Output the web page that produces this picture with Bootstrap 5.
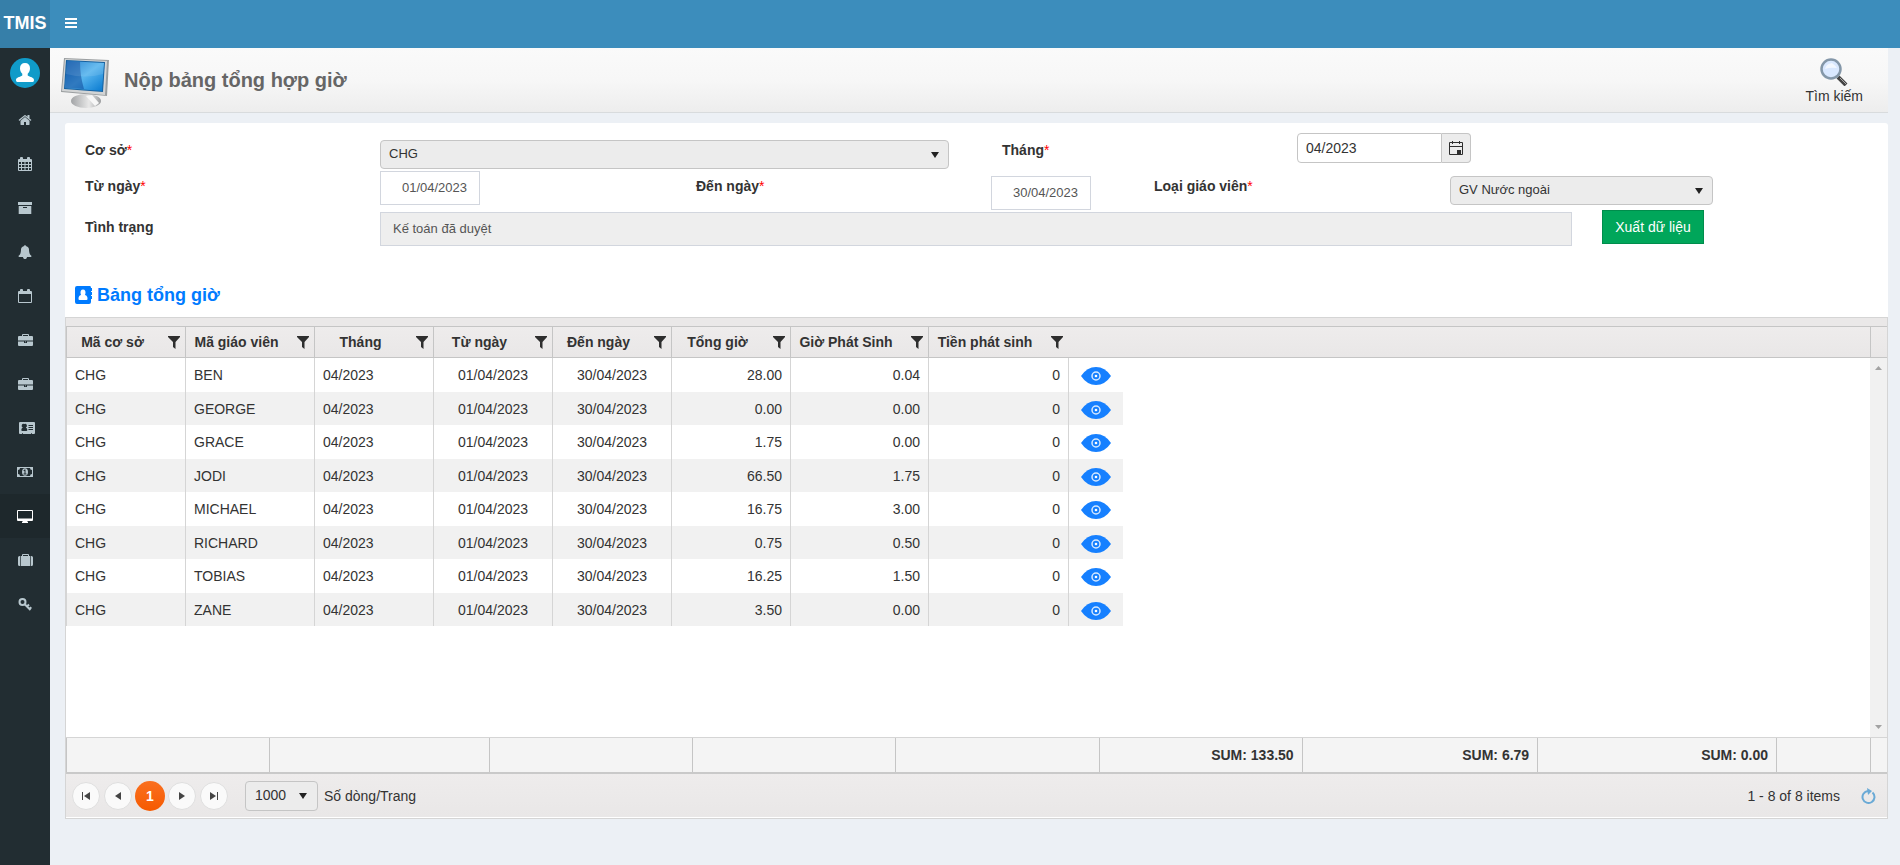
<!DOCTYPE html>
<html lang="vi">
<head>
<meta charset="utf-8">
<meta name="viewport" content="width=device-width, initial-scale=1">
<title>TMIS - Nộp bảng tổng hợp giờ</title>
<link href="https://cdn.jsdelivr.net/npm/bootstrap@5.3.0/dist/css/bootstrap.min.css" rel="stylesheet">
<style>
body{font-family:"Liberation Sans",Arial,sans-serif;font-size:14px;line-height:20px;color:#333;background:#ecf0f5}
svg{display:block}
.topbar{background:#3c8dbc;height:48px}
.brand{width:50px;padding-bottom:2px;background:#367fa9;font-size:18px}
.toggle{width:42px;padding:0 0 2px}
.side{width:50px;background:#222d32}
.side-user{height:50px;padding-top:10px}
.side a{height:44px;color:#b8c7ce}
.side a.active{background:#1e282c;color:#fff}
.page-main{min-width:0;padding-bottom:46px}
.page-head{height:65px;margin-right:12px;background:linear-gradient(#fafafa,#f7f7f7 50%,#ededed);border-bottom:1px solid #d8dbdd}
.page-head h1{font-size:20px;line-height:24px;color:#666;margin-left:14px}
.find{color:#333;margin-right:25px;padding-top:4px}
.panel{margin:10px 12px 0 15px;background:#fff;border-radius:3px 3px 0 0}
.filters{padding:10px 15px 0 20px}
.line{display:grid;align-items:start}
.line-1{grid-template-columns:295fr 569fr 53fr 295fr 576fr;min-height:38px}
.line-2{grid-template-columns:295fr 316fr 295fr 163fr 296fr 263fr 160fr}
.line-3{grid-template-columns:295fr 1192fr 30fr 271fr}
.line label{font-weight:700}
.line sup{color:#f00;font-weight:400;font-size:14px;line-height:0;top:0;vertical-align:baseline}
.mt-s{margin-top:5px}.mt-m{margin-top:7px}.mt-xs{margin-top:2px}
.pick{height:29px;padding:0 28px 2px 8px;font-size:13px;line-height:20px;color:#333;border:1px solid #c5c5c5;border-radius:4px;background:#ececec url("data:image/svg+xml,%3Csvg xmlns='http://www.w3.org/2000/svg' width='8' height='6'%3E%3Cpath d='M0 0h8L4 6z' fill='%23222'/%3E%3C/svg%3E") no-repeat right 9px center;background-size:8px 6px}
.flat{height:34px;border:1px solid #d2d6de;border-radius:0;font-size:13px;color:#555;padding:0 12px 2px}
.flat.date{width:100px;text-align:right}
.flat[readonly]{background:#eee}
.month{width:174px;height:30px}
.month input{border:1px solid #c5c5c5;border-radius:4px 0 0 4px;font-size:14px;color:#333;padding:0 8px}
.month button{width:29px;flex-shrink:0;border:1px solid #c5c5c5;border-left:0;border-radius:0 4px 4px 0;background:#ececec;padding:0}
.export{width:102px;height:34px;border:1px solid #008d4c;background:#00a65a;color:#fff;border-radius:0;font-size:14px;padding:0}
.panel h2{font-size:18px;line-height:24px;color:#007bff;margin:37px 0 10px 10px}
.grid-box{margin:0 12px 0 15px;border:1px solid #d5d5d5;background:#fff}
.grid-tools{height:8px;background:#eae8e8}
.grid-box table{table-layout:fixed;border-collapse:separate;border-spacing:0}
.grid-head{background:linear-gradient(#eeecec,#e9e7e7);border-top:1px solid #c5c5c5;border-bottom:1px solid #c5c5c5}
.grid-head th{height:30px;padding:0;border-left:1px solid #c5c5c5}
.grid-head th:last-child{border-left:0}
.head-cell{padding:0 5px 0 7px}
.head-cell span{flex:1;text-align:center;white-space:nowrap}
.head-cell button{border:0;background:none;padding:1px 0 0 17px;color:#2e2e2e}
.scroll-pad{width:17px}
.head-pad{border-left:1px solid #c5c5c5}
.c-a{width:119px}.c-b{width:129px}.c-c{width:138px}.c-d{width:140px}.c-e{width:55px}
.rows{width:1057px}
.rows td{height:34px;padding:0 8px;border-left:1px solid #d5d5d5}
.rows tr:nth-child(even) td{height:33px;background:#f1f1f1}
.rows td:last-child{padding:2px 12px 0 12px}
.rows button{border:0;background:none;padding:0;display:block}
.track{background:#f1f1f1;padding:8px 4px}
.sums{background:#f4f4f4;border-top:1px solid #d5d5d5;border-bottom:2px solid #c9c9c9}
.sums td{height:34px;padding:0 8px;border-left:1px solid #c5c5c5;font-weight:700;text-align:right}
.pager{height:44px;background:linear-gradient(#eeecec,#e9e7e7);padding:0 11px 0 6px;border-bottom:1px solid #fff}
.round{width:28px;height:28px;border:1px solid #dfdfdf;border-radius:50%;background:#fafafa;padding:0;color:#444}
.round.now{width:30px;height:30px;margin:0 -1px;border:0;color:#fff;font-weight:700;background:linear-gradient(#fa7020,#f65a00)}
.size{width:73px;height:30px;font-size:14px;margin-left:17px;padding-left:9px;background-position:right 10px center}
.size-label{margin-left:6px}
</style>
</head>
<body>
<div class="d-flex flex-column min-vh-100">
<header class="topbar d-flex">
  <a href="#" class="brand d-flex align-items-center justify-content-center text-white fw-bold text-decoration-none">TMIS</a>
  <button class="toggle btn border-0 d-flex align-items-center justify-content-center" aria-label="Menu"><svg width="12" height="10" fill="#fff"><path d="M0 0h12v2H0zM0 4h12v2H0zM0 8h12v2H0z"/></svg></button>
</header>
<div class="d-flex flex-grow-1">
<nav class="side flex-shrink-0">
  <div class="side-user d-flex justify-content-center"><svg width="30" height="30"><circle cx="15" cy="15" r="15" fill="#109bc9"/><path d="M15 5c3.200 0 5 2 5 5.300 0 2.300-1 4.200-2.300 5.500v1.700c2 1.500 6.800 1.800 6.300 5-.2 1-1 1.500-2 1.500H8c-1 0-1.800-.5-2-1.500-.5-3.200 4.300-3.500 6.300-5v-1.700C11 14.500 10 12.600 10 10.300 10 7 11.800 5 15 5z" fill="#fff"/></svg></div>
  <a href="#" class="d-flex align-items-center justify-content-center" aria-label="Trang chủ"><svg width="14" height="14" viewBox="0 0 1792 1792" fill="currentColor"><path d="M1472 992v480q0 26-19 45t-45 19h-384v-384h-256v384h-384q-26 0-45-19t-19-45v-480q0-1 .5-3t.5-3l575-474 575 474q1 2 1 6zm223-69l-62 74q-8 9-21 11h-3q-13 0-21-7l-692-577-692 577q-12 8-24 7-13-2-21-11l-62-74q-8-10-7-23.500t11-21.500l719-599q32-26 76-26t76 26l244 204v-195q0-14 9-23t23-9h192q14 0 23 9t9 23v408l219 182q10 8 11 21.500t-7 23.500z"/></svg></a>
  <a href="#" class="d-flex align-items-center justify-content-center" aria-label="Lịch"><svg width="14" height="14" fill="currentColor" fill-rule="evenodd"><path d="M1 2h1V1q0-1 1-1h1q1 0 1 1v1h4V1q0-1 1-1h1q1 0 1 1v1h1q1 0 1 1v10q0 1-1 1H1q-1 0-1-1V3q0-1 1-1zM1 5v2h2V5zM4 5v2h2.500V5zM7.500 5v2H10V5zM11 5v2h2V5zM1 8v2h2V8zM4 8v2h2.500V8zM7.500 8v2H10V8zM11 8v2h2V8zM1 11v2h2v-2zM4 11v2h2.500v-2zM7.500 11v2H10v-2zM11 11v2h2v-2z"/></svg></a>
  <a href="#" class="d-flex align-items-center justify-content-center" aria-label="Lưu trữ"><svg width="14" height="12" fill="currentColor" fill-rule="evenodd"><path d="M0 0h14v3H0zM.7 4h12.600v8H.7zM5 5v1h4V5z"/></svg></a>
  <a href="#" class="d-flex align-items-center justify-content-center" aria-label="Thông báo"><svg width="14" height="14" viewBox="0 0 1792 1792" fill="currentColor"><path d="M1728 1408q0 52-38 90t-90 38h-448q0 106-75 181t-181 75-181-75-75-181h-448q-52 0-90-38t-38-90q50-42 91-88t85-119.500 74.500-158.500 50-206 19.500-260q0-152 117-282.500t307-158.500q-8-19-8-39 0-40 28-68t68-28 68 28 28 68q0 20-8 39 190 28 307 158.500t117 282.500q0 139 19.500 260t50 206 74.500 158.500 85 119.500 91 88z"/></svg></a>
  <a href="#" class="d-flex align-items-center justify-content-center" aria-label="Lịch dạy"><svg width="14" height="14" fill="currentColor" fill-rule="evenodd"><path d="M1 2h1V1q0-1 1-1h1q1 0 1 1v1h4V1q0-1 1-1h1q1 0 1 1v1h1q1 0 1 1v10q0 1-1 1H1q-1 0-1-1V3q0-1 1-1zM1 5v8h12V5z"/></svg></a>
  <a href="#" class="d-flex align-items-center justify-content-center" aria-label="Công việc"><svg width="15" height="12" fill="currentColor" fill-rule="evenodd"><path d="M4 2V1q0-1 1-1h5q1 0 1 1v1h3q1 0 1 1v3.500H0V3q0-1 1-1zM5 1v1h5V1zM0 7.500h6V9h3V7.500h6V11q0 1-1 1H1q-1 0-1-1zM7 7.500h1v.8H7z"/></svg></a>
  <a href="#" class="d-flex align-items-center justify-content-center" aria-label="Hợp đồng"><svg width="15" height="12" fill="currentColor" fill-rule="evenodd"><path d="M4 2V1q0-1 1-1h5q1 0 1 1v1h3q1 0 1 1v3.500H0V3q0-1 1-1zM5 1v1h5V1zM0 7.500h6V9h3V7.500h6V11q0 1-1 1H1q-1 0-1-1zM7 7.500h1v.8H7z"/></svg></a>
  <a href="#" class="d-flex align-items-center justify-content-center ps-1" aria-label="Nhân sự"><svg width="16" height="12" fill="currentColor" fill-rule="evenodd"><path d="M1 0h14q1 0 1 1v10q0 1-1 1h-2v-.7h-1v.7H4v-.7H3v.7H1q-1 0-1-1V1q0-1 1-1zM5.300 2a1.900 1.900 0 0 0-1.500 3.500Q2.300 6 2.300 8q0 1 1 1h4q1 0 1-1 0-2-1.500-2.500A1.900 1.900 0 0 0 5.300 2zM9.500 3v1h4.500V3zM9.500 5v1h4.500V5zM9.500 7v1h4.500V7z"/></svg></a>
  <a href="#" class="d-flex align-items-center justify-content-center" aria-label="Tiền lương"><svg width="16" height="10" fill="currentColor" fill-rule="evenodd"><path d="M0 0h16v10H0zM3 1Q3 3 1 3v4q2 0 2 2h10q0-2 2-2V3q-2 0-2-2z"/><path d="M8 1.200c2 0 3 1.700 3 3.800S10 8.800 8 8.800 5 7.100 5 5s1-3.800 3-3.800zM7.500 2.500L6.500 3.500v.6h1V6.500h-1v1h3v-1h-1v-4z"/></svg></a>
  <a href="#" class="active d-flex align-items-center justify-content-center" aria-label="Bảng giờ"><svg width="16" height="13" fill="currentColor" fill-rule="evenodd"><path d="M1 0h14q1 0 1 1v9q0 1-1 1h-4.500v1h.5v1H5v-1h.5v-1H1q-1 0-1-1V1q0-1 1-1zM1 1v7.500h14V1z"/></svg></a>
  <a href="#" class="d-flex align-items-center justify-content-center" aria-label="Hành lý"><svg width="15" height="12" fill="currentColor" fill-rule="evenodd"><path d="M4 2V1q0-1 1-1h5q1 0 1 1v1h1v10H3V2zM5 1v1h5V1zM2.300 2v10H1.500Q0 12 0 10.500v-7Q0 2 1.500 2zM12.700 2h.8Q15 2 15 3.500v7q0 1.500-1.500 1.500h-.8z"/></svg></a>
  <a href="#" class="d-flex align-items-center justify-content-center" aria-label="Mật khẩu"><svg width="14" height="13" fill="none" stroke="currentColor" stroke-width="2"><ellipse cx="4.500" cy="4" rx="3" ry="3"/><path d="M6.500 6l6 6M9 8.500L11 6.500M11.500 11l1.800-1.800"/></svg></a>
</nav>
<main class="page-main d-flex flex-column flex-grow-1">
  <div class="page-head d-flex align-items-center justify-content-between">
    <div class="d-flex align-items-center">
      <svg class="ms-2" width="52" height="56"><defs><linearGradient id="scr" x1="0" y1="0" x2="1" y2="1"><stop offset="0" stop-color="#1173c9"/><stop offset=".5" stop-color="#58b5ee"/><stop offset="1" stop-color="#0678cf"/></linearGradient><linearGradient id="met" x1="0" y1="0" x2="1" y2="0"><stop offset="0" stop-color="#a2a4a6"/><stop offset=".6" stop-color="#e8e8e8"/><stop offset="1" stop-color="#9b9d9f"/></linearGradient></defs><ellipse cx="28" cy="49" rx="15" ry="7" fill="url(#met)"/><path d="M28 44l9 10 4-3-7-8z" fill="#f7f7f7"/><path d="M6 6l45 2-2 36-46-4z" fill="#9b9fa1"/><path d="M7 7l42 2-2 34-43-4z" fill="#d2d4d5"/><path d="M8 8l39 2-2 30-39-3z" fill="#17619f"/><path d="M9 9l37 2-2 28-37-3z" fill="url(#scr)"/><path d="M9 9l13 1q0 14 4 27L7 36z" fill="#0a3f92" opacity=".5"/><path d="M8 22q20 5 37 0l1-11L9 9z" fill="#fff" opacity=".1"/></svg>
      <h1 class="fw-bold my-0">Nộp bảng tổng hợp giờ</h1>
    </div>
    <a href="#" class="find text-decoration-none text-center d-flex flex-column align-items-center"><svg width="28" height="28"><path d="M18 19l8 8" stroke="#444" stroke-width="4"/><path d="M20 20l6 6" stroke="#aaa" stroke-width="1"/><circle cx="11" cy="11" r="9.500" fill="#d9e8ff" stroke="#8497a9" stroke-width="2.500"/><path d="M5 11q1-5 7-6 4 3 5 5-7-1-12 1z" fill="#f2f7ff"/></svg><span>Tìm kiếm</span></a>
  </div>
  <section class="panel">
    <form class="filters" onsubmit="return false">
      <div class="line line-1">
        <label class="mt-m" for="site">Cơ sở<sup>*</sup></label>
        <select id="site" class="pick form-select mt-m"><option>CHG</option></select>
        <span></span>
        <label class="mt-m" for="month">Tháng<sup>*</sup></label>
        <div class="month d-flex"><input id="month" class="form-control" value="04/2023"><button type="button" class="d-flex align-items-center justify-content-center" aria-label="Chọn tháng"><svg width="16" height="16" fill="none" stroke="#2e2e2e"><path d="M1.500 2.500h13v12h-13zM1.500 6.500h13M4.500 1v3M11.500 1v3"/><path d="M9 10h4v4H9z" fill="#2e2e2e" stroke="none"/></svg></button></div>
      </div>
      <div class="line line-2">
        <label class="mt-s" for="from">Từ ngày<sup>*</sup></label>
        <input id="from" class="flat date form-control" value="01/04/2023">
        <label class="mt-s" for="to">Đến ngày<sup>*</sup></label>
        <input id="to" class="flat date form-control mt-s" value="30/04/2023">
        <label class="mt-s" for="kind">Loại giáo viên<sup>*</sup></label>
        <select id="kind" class="pick form-select mt-s"><option>GV Nước ngoài</option></select>
      </div>
      <div class="line line-3">
        <label class="mt-m" for="state">Tình trạng</label>
        <input id="state" class="flat form-control mt-xs" value="Kế toán đã duyệt" readonly>
        <span></span>
        <button class="export">Xuất dữ liệu</button>
      </div>
    </form>
    <h2 class="fw-bold d-flex align-items-center"><svg class="me-1" width="18" height="18" fill="#007bff" fill-rule="evenodd"><path d="M2 0h13q1 0 1 2h1v3h-1v1h1v3h-1v1h1v3h-1v3q0 2-2 2H2q-2 0-2-2V2Q0 0 2 0zM8 3.500C6 3.500 5.500 5 5.500 6.500S6 8.500 6 9C4 9.500 3.500 11 3.500 13q0 1 1 1h7q1 0 1-1c0-2-.5-3.500-2.500-4 0-.5.5-1 .5-2.500S10 3.500 8 3.500z"/></svg>Bảng tổng giờ</h2>
  </section>
  <section class="grid-box d-flex flex-column flex-grow-1">
    <div class="grid-tools"></div>
    <div class="grid-head d-flex">
      <table class="flex-grow-1"><colgroup><col class="c-a"><col class="c-b"><col class="c-a"><col class="c-a"><col class="c-a"><col class="c-a"><col class="c-c"><col class="c-d"><col></colgroup>
      <thead><tr id="heads"></tr></thead></table>
      <div class="scroll-pad head-pad"></div>
    </div>
    <div class="d-flex flex-grow-1">
      <div class="flex-grow-1"><table class="rows"><colgroup><col class="c-a"><col class="c-b"><col class="c-a"><col class="c-a"><col class="c-a"><col class="c-a"><col class="c-c"><col class="c-d"><col class="c-e"></colgroup><tbody id="rows"></tbody></table></div>
      <div class="scroll-pad track d-flex flex-column justify-content-between align-items-center"><svg width="7" height="4" fill="#a3a3a3"><path d="M0 4h7L3.500 0z"/></svg><svg width="7" height="4" fill="#a3a3a3"><path d="M0 0h7L3.500 4z"/></svg></div>
    </div>
    <div class="sums d-flex">
      <table class="flex-grow-1"><colgroup><col class="c-a"><col class="c-b"><col class="c-a"><col class="c-a"><col class="c-a"><col class="c-a"><col class="c-c"><col class="c-d"><col class="c-e"></colgroup>
      <tbody><tr><td></td><td></td><td></td><td></td><td></td><td>SUM: 133.50</td><td>SUM: 6.79</td><td>SUM: 0.00</td><td></td></tr></tbody></table>
      <div class="scroll-pad head-pad"></div>
    </div>
    <div class="pager d-flex align-items-center">
      <div class="d-flex align-items-center gap-1">
        <button class="round d-flex align-items-center justify-content-center" aria-label="Trang đầu"><svg width="8" height="8" fill="currentColor"><path d="M0 0h1v8H0zM8 0v8L2 4z"/></svg></button>
        <button class="round d-flex align-items-center justify-content-center" aria-label="Trang trước"><svg width="6" height="8" fill="currentColor"><path d="M6 0v8L0 4z"/></svg></button>
        <button class="round now">1</button>
        <button class="round d-flex align-items-center justify-content-center" aria-label="Trang sau"><svg width="6" height="8" fill="currentColor"><path d="M0 0v8l6-4z"/></svg></button>
        <button class="round d-flex align-items-center justify-content-center" aria-label="Trang cuối"><svg width="8" height="8" fill="currentColor"><path d="M7 0h1v8H7zM0 0v8l6-4z"/></svg></button>
      </div>
      <select id="size" class="size pick form-select"><option>1000</option></select>
      <label for="size" class="size-label">Số dòng/Trang</label>
      <span class="ms-auto">1 - 8 of 8 items</span>
      <a href="#" class="ms-3 ps-1" aria-label="Làm mới"><svg width="16" height="16" fill="none" stroke="#6aaad6" stroke-width="2"><path d="M12.500 4.500A6 6 0 1 1 8 3"/><path d="M7 0l5 3-4 4z" fill="#6aaad6" stroke="none"/></svg></a>
    </div>
  </section>
</main>
</div>
</div>
<script>
const heads = ["Mã cơ sở","Mã giáo viên","Tháng","Từ ngày","Đến ngày","Tổng giờ","Giờ Phát Sinh","Tiền phát sinh"];
document.getElementById("heads").innerHTML = heads.map(h => `<th><div class="head-cell d-flex align-items-center"><span>${h}</span><button aria-label="Lọc"><svg width="12" height="13" fill="currentColor"><path d="M0 0h12v1L7.500 6v7L5 11V6L0 1z"/></svg></button></div></th>`).join("") + "<th></th>";
const rows = [["BEN","28.00","0.04"],["GEORGE","0.00","0.00"],["GRACE","1.75","0.00"],["JODI","66.50","1.75"],["MICHAEL","16.75","3.00"],["RICHARD","0.75","0.50"],["TOBIAS","16.25","1.50"],["ZANE","3.50","0.00"]];
document.getElementById("rows").innerHTML = rows.map(([n, t, p]) => `<tr><td>CHG</td><td>${n}</td><td>04/2023</td><td class="text-center">01/04/2023</td><td class="text-center">30/04/2023</td><td class="text-end">${t}</td><td class="text-end">${p}</td><td class="text-end">0</td><td><button aria-label="Xem"><svg width="30" height="18"><path d="M0 9Q6 0 15 0t15 9q-6 9-15 9T0 9z" fill="#1680ff"/><circle cx="15" cy="9" r="4" fill="none" stroke="#d5e8ff" stroke-width="1.500"/><circle cx="15" cy="9" r="1.300" fill="#fff"/></svg></button></td></tr>`).join("");
</script>
<script src="https://cdn.jsdelivr.net/npm/bootstrap@5.3.0/dist/js/bootstrap.bundle.min.js"></script>
</body>
</html>
